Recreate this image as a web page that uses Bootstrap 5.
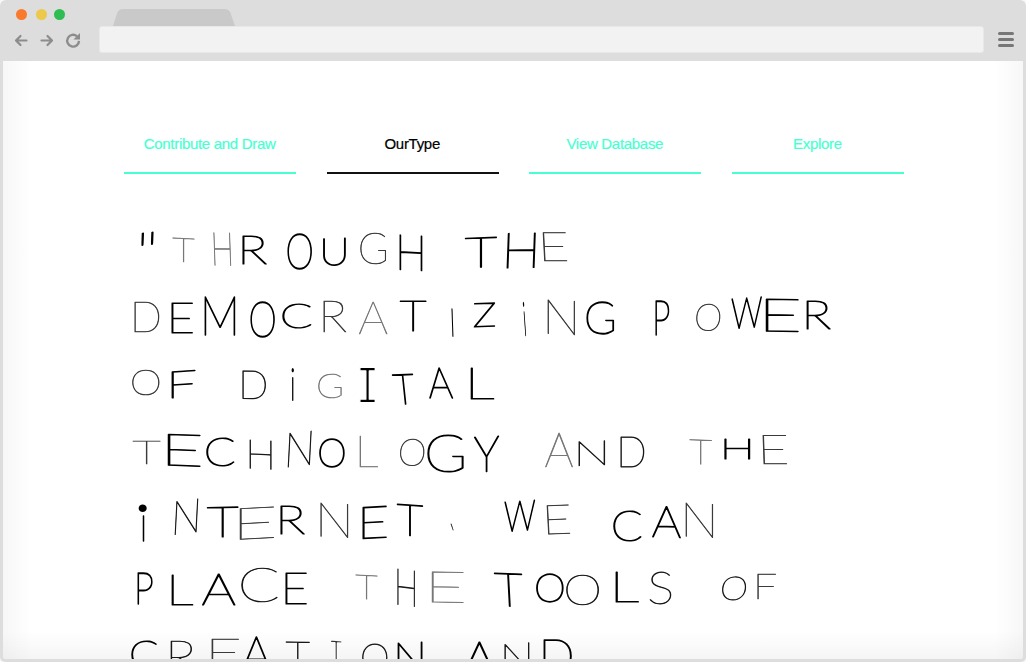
<!DOCTYPE html>
<html lang="en">
<head>
<meta charset="utf-8">
<meta name="viewport" content="width=device-width, initial-scale=1">
<title>OurType</title>
<link href="https://cdn.jsdelivr.net/npm/bootstrap@5.3.0/dist/css/bootstrap.min.css" rel="stylesheet">
<style>
body{background:#f8f8f8;font-family:"Liberation Sans",Arial,sans-serif;font-size:15px}
.browser{height:662px;background:#ddd;border-radius:6px 6px 5px 5px;padding:0 3px 3px}
.chrome{height:61px;padding-left:9px}
.tabrow{height:26px;padding-left:4px}
.lights{margin-top:9px;width:97px}
.dot{width:11px;height:11px;border-radius:50%}
.dot+.dot{margin-left:9px}.dot+.dot+.dot{margin-left:7px}
.address{width:885px;height:27px;background:#f2f2f2;border:1px solid #e8e8e8;border-radius:3px}
.tools{width:87px}
.view{height:598px;border-radius:0 0 2px 2px;background:
 linear-gradient(to top,rgba(0,0,0,.04),rgba(0,0,0,0) 28px),
 linear-gradient(to right,rgba(0,0,0,.032),rgba(0,0,0,0) 29px),
 linear-gradient(to left,rgba(0,0,0,.032),rgba(0,0,0,0) 29px),#fff}
.tabs4{gap:30.3px;width:780px;margin-left:121px;padding-top:71px}
.tabs4 .nav-link{color:#48ffd2;width:172.3px;height:42.3px;padding:0 1px 0 0;line-height:24px;border-bottom:2px solid #48ffd2;text-align:center;letter-spacing:-.3px;-webkit-text-stroke:.2px currentColor}
.tabs4 .nav-link.active{color:#000;border-color:#111}
.quote{margin-left:121px;padding-top:43.7px;filter:url(#pen)}
.verse{height:67.5px}
.glyph{display:block;overflow:visible;flex:none}
</style>
</head>
<body>
<div class="browser overflow-hidden">
  <header class="chrome">
    <div class="tabrow d-flex align-items-start">
      <div class="lights d-flex ms-0">
        <span class="dot" style="background:#f97a2d"></span><span class="dot" style="background:#ecc84b"></span><span class="dot" style="background:#2dbd50"></span>
      </div>
      <svg class="align-self-end" width="122" height="17"><path d="M0 17L4 4.500Q5.500 0 10 0H111Q116 0 117.500 4L122 17Z" fill="#c9c9c9"/></svg>
    </div>
    <div class="d-flex align-items-center">
      <svg class="tools" width="87" height="27" fill="none" stroke="#8c8c8c" stroke-width="2.200" stroke-linecap="round" stroke-linejoin="round">
        <path d="M14.500 14.500H4.500M8.500 10L4 14.500L8.500 19M29.500 14.500H39.500M35.500 10L40 14.500L35.500 19"/>
        <path d="M65 10.300A5.900 5.900 0 1 0 67 14.900" stroke-width="2.400" stroke-linecap="butt"/>
        <path d="M68 7V13.500H61.500Z" fill="#8c8c8c" stroke="none"/>
      </svg>
      <div class="address"></div>
      <svg class="ms-auto me-2" width="17" height="27" stroke="#777" stroke-width="3" stroke-linecap="round"><path d="M1.500 7.500H14.500M1.500 13.500H14.500M1.500 19.500H14.500"/></svg>
    </div>
  </header>
  <main class="view overflow-hidden">
    <nav class="nav flex-nowrap tabs4">
      <a class="nav-link" href="#">Contribute and Draw</a>
      <a class="nav-link active" href="#">OurType</a>
      <a class="nav-link" href="#">View Database</a>
      <a class="nav-link" href="#">Explore</a>
    </nav>
    <div class="quote" id="quote"></div>
    <!-- soft pen line for the drawn letters -->
    <svg width="0" height="0">
      <filter id="pen" x="-2%" y="-2%" width="104%" height="104%" color-interpolation-filters="sRGB">
        <feGaussianBlur stdDeviation=".25"/>
      </filter>
    </svg>
  </main>
</div>
<script src="https://cdn.jsdelivr.net/npm/bootstrap@5.3.0/dist/js/bootstrap.bundle.min.js"></script>
<script>
// Letter, ink tone (k black, d dark, m medium, g light), left, right, top, bottom,
// then optionally the slope of its bars and of its stems in degrees.
// A blank entry opens a new word.
const verses = [
 '" k 140.5 153.3 232 247 -6 -2|T g 172.3 195.3 238 263.7 3|H g 213 231.7 232.7 266.7 1 2|R k 242 267.7 236 265.7|O k 287.3 312.7 235 271|U k 322.7 346 238.3 267.3 -2|G m 360 386 234.3 266|H k 399.3 423.3 235.3 272.7 3||T k 464 497.3 236.7 269 -2|H k 505.7 536.3 232.7 269.3 -1 -2|E m 541.7 567.7 233.3 262.7 0 3',
 'D m 134.3 160.3 303 333|E k 171.3 194 304 335|M k 204 236 297.3 336.7|O k 249.7 275 302 338.3|C k 282.3 311.7 305.3 330.3|R m 323 347 300.7 332.7|A g 358.7 387.7 302.3 335.7|T k 399.3 427 302.3 332.7|I k 450.6 453.4 309 337.3 0 2|Z k 473 495.7 303.3 329 -2|i k 523 526.2 302.7 336.3 0 4|N m 546.7 575.3 300 336.3 3|G k 586 614 302.3 335.7||P k 655.3 670 301.7 336.3|O m 695.3 722 303.7 332.3 3 -4|W k 730.7 762 297.3 330.7 -4|E k 765.3 800 299.3 333.7 1|R k 806 831.3 301.3 331',
 'O m 132 160 370 396.3|F k 171 196.3 370.3 400 -4||D d 242 266.7 371 400.3 1|i k 290.7 294 369.3 401.7|G g 317.7 341.3 375.3 399.7|I s 359.7 375 369.3 403.7|T k 390.7 416.3 373.7 406 -2 6|A k 427 453.7 368.3 400 0 4|L k 470 495 369.3 401.3|',
 'T m 131.7 160.7 442.3 465.3|E k 166.7 201.3 434.3 468.3 2|C k 205.7 234.3 439.3 468.3|H d 248.7 271.7 440 470.7 3|N d 287 312.3 431.3 468.7 -6 -3|O k 319 345.3 440 469|L g 358.7 378.3 437 468.7|O m 399 426 438.7 467.3 3 -4|G k 426.7 463.3 435.7 473.3|Y k 472.7 499.3 436 474 -3||A g 545 573.3 433.7 468.3|N d 578.3 606 440.7 467 -2|D d 620 645 438.3 468.3||T g 688.7 712 440.3 466.3 2|H k 724.3 751 439.3 460.7|E m 762 788 436 465.7 0 2',
 '• b 138 146.7 504 512.3|ı k 141.7 144.5 516.7 542.7|N d 173.7 198.7 498.7 536 -7 -3|T k 206 238.7 506.7 538.7 -1|E m 239 275.3 506.7 540.7 -3|R k 280 305.7 506.3 536|N m 320 349 502.7 538.7 3|E k 362.3 388 506 540.3 -3|T k 396.3 423.7 504 538.3 4|` m 450 453.7 524 530.7||W k 503.7 535.3 500 533.3 -4|E m 546 571 505.3 536 -2 3||C k 613 641.7 512 542.3|A k 652 681.3 506.3 539.7 2|N m 685.3 714 502.7 538.7 3',
 'P k 137.3 153.3 572.7 605.7|L k 171.3 194.3 574.7 606.3|A k 202 236 574.3 607|C d 241 278 568 603.3|E k 284.7 307.3 574 605.7||T g 355 378 575.3 601.3 3|H d 397.3 415.7 569.3 608.3 7|E g 431.3 465 572 604 1||T k 492.7 524 573.3 608.7 2 3|O k 536 564.3 575.3 604.3|O d 566 599.7 576 606.7|L k 615 639.7 572.3 603.7|S d 649.3 672.3 571.7 604.7||O d 721.3 747.7 577.3 602 -2 -4|F m 757.3 777 575.3 601',
 'C k 130.7 157.3 642 670|R d 170 196 641 674|E m 211 240 639.7 668|A k 241 272 637 674|T d 284.7 309.7 641.7 672 1|I h 331 341.7 640.7 672 4|O d 362.3 388.3 645 672|N k 396.7 422.7 642 674 -3||A k 464 495 641.7 674|N d 504.3 530.3 643.3 674 -4|D k 543.3 573 640 674'
];
const lato = '100 48px Lato', mono = '400 48px "Liberation Mono"';
// tone: fill, outline width, font, outline colour
const tones = {
  k:['#000',1.3,lato,'#000'], d:['#181818',.8,lato,'#181818'], m:['#3a3a3a',.65,lato,'#3a3a3a'], g:['#777',.7,lato,'#777'],
  s:['#000',1.6,mono,'#fff'], h:['#333',2,mono,'#fcfcfc'], b:['#000',0,mono,'none']
};
const ctx = document.createElement('canvas').getContext('2d');
const NS = 'http://www.w3.org/2000/svg';
const quote = document.getElementById('quote');
verses.forEach((verse, row) => {
  const line = document.createElement('div');
  line.className = 'verse d-flex align-items-start';
  let pen = 124;
  const top = 219 + row * 67.5;
  verse.split('||').forEach(word => {
    const box = document.createElement('div');
    box.className = 'd-flex align-items-start';
    word.split('|').filter(Boolean).forEach(item => {
      const [ch, tone, ...n] = item.split(' ');
      const [x0, x1, y0, y1, bars = 0, stems = 0] = n.map(Number);
      const [ink, width, font, outline] = tones[tone];
      // a pale outline thins the letter, so it reaches past the ink box
      const edge = font === mono ? -width : width;
      ctx.font = font;
      const m = ctx.measureText(ch);
      const w = m.actualBoundingBoxLeft + m.actualBoundingBoxRight;
      const h = m.actualBoundingBoxAscent + m.actualBoundingBoxDescent;
      const W = x1 - x0, H = y1 - y0;
      // slopes widen a letter, so its size gives way by the same amount
      const fitW = Math.max(W * .7, W - H * Math.abs(Math.tan(stems * Math.PI / 180)));
      const fitH = H - W * Math.abs(Math.tan(bars * Math.PI / 180));
      const sx = (fitW - edge) / w, sy = (fitH - edge) / h;
      const svg = document.createElementNS(NS, 'svg');
      svg.setAttribute('class', 'glyph');
      svg.setAttribute('width', W);
      svg.setAttribute('height', H);
      svg.style.margin = `${y0 - top}px 0 0 ${x0 - pen}px`;
      const t = document.createElementNS(NS, 'text');
      t.textContent = ch;
      t.style.font = font;
      t.setAttribute('fill', ink);
      if (width) {
        t.setAttribute('stroke', outline);
        t.setAttribute('stroke-width', width / Math.sqrt(sx * sy));
        t.setAttribute('stroke-linejoin', 'round');
      }
      t.setAttribute('transform', `translate(${W/2} ${H/2}) skewY(${bars}) skewX(${stems}) translate(${(edge-fitW)/2} ${(edge-fitH)/2}) scale(${sx} ${sy}) translate(${m.actualBoundingBoxLeft} ${m.actualBoundingBoxAscent})`);
      svg.append(t);
      box.append(svg);
      pen = x1;
    });
    line.append(box);
  });
  quote.append(line);
});
</script>
</body>
</html>
